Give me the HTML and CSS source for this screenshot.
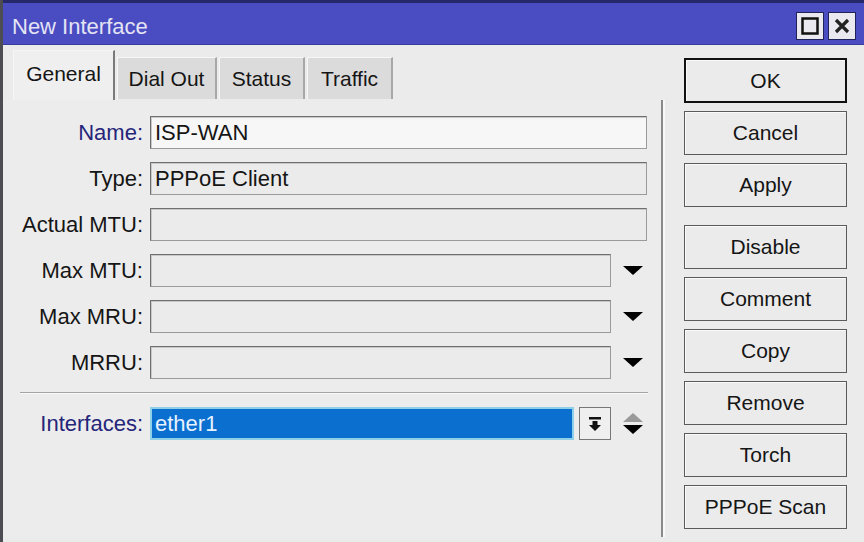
FILE: index.html
```html
<!DOCTYPE html>
<html>
<head>
    <title>New Interface</title>
    <link rel="stylesheet" href="styles.css">
</head>
<body>
<div class="window">
    <div class="titlebar">
        <span class="title">New Interface</span>
        <div class="winbtns">
            <span class="winbtn">
                <svg width="18" height="18" viewBox="0 0 18 18"><rect x="1.5" y="1.5" width="15" height="15" fill="none" stroke="#111" stroke-width="2.5"/></svg>
            </span>
            <span class="winbtn">
                <svg width="16" height="16" viewBox="0 0 16 16"><path d="M2 2 L14 14 M14 2 L2 14" stroke="#222" stroke-width="3.2"/></svg>
            </span>
        </div>
    </div>
    <div class="main">
        <div class="tabsarea">
            <div class="tabs">
                <div class="tab active">General</div>
                <div class="tab">Dial Out</div>
                <div class="tab">Status</div>
                <div class="tab">Traffic</div>
            </div>
            <div class="panel">
                <div class="row">
                    <span class="label key">Name:</span>
                    <div class="field"><div class="input white">ISP-WAN</div></div>
                </div>
                <div class="row">
                    <span class="label">Type:</span>
                    <div class="field"><div class="input">PPPoE Client</div></div>
                </div>
                <div class="row">
                    <span class="label">Actual MTU:</span>
                    <div class="field"><div class="input"></div></div>
                </div>
                <div class="row">
                    <span class="label">Max MTU:</span>
                    <div class="field"><div class="input"></div><span class="drop"><i class="tri down"></i></span></div>
                </div>
                <div class="row">
                    <span class="label">Max MRU:</span>
                    <div class="field"><div class="input"></div><span class="drop"><i class="tri down"></i></span></div>
                </div>
                <div class="row">
                    <span class="label">MRRU:</span>
                    <div class="field"><div class="input"></div><span class="drop"><i class="tri down"></i></span></div>
                </div>
                <div class="separator"></div>
                <div class="row">
                    <span class="label key">Interfaces:</span>
                    <div class="field">
                        <div class="input selected">ether1</div>
                        <span class="smallbtn">
                            <svg width="14" height="16" viewBox="0 0 14 16"><rect x="1" y="1" width="12" height="2.5" fill="#111"/><path d="M4.5 5 H9.5 V9 H13 L7 15 L1 9 H4.5 Z" fill="#111"/></svg>
                        </span>
                        <span class="drop updown"><i class="tri up"></i><i class="tri down"></i></span>
                    </div>
                </div>
            </div>
        </div>
        <div class="actions">
            <div class="btn default">OK</div>
            <div class="btn">Cancel</div>
            <div class="btn">Apply</div>
            <div class="btn spaced">Disable</div>
            <div class="btn">Comment</div>
            <div class="btn">Copy</div>
            <div class="btn">Remove</div>
            <div class="btn">Torch</div>
            <div class="btn">PPPoE Scan</div>
        </div>
    </div>
</div>
</body>
</html>
```

FILE: styles.css
```css
body {
    margin: 0;
    background-color: #ebebeb;
    font-family: "Liberation Sans", Arial, sans-serif;
    font-size: 21px;
    color: #151515;
}

.window {
    width: 864px;
    height: 542px;
    box-sizing: border-box;
    border-left: 3px solid #4c4c52;
    overflow: hidden;
}

.titlebar {
    height: 45px;
    box-sizing: border-box;
    background-color: #4a4cc2;
    border-top: 3px solid #26286a;
    border-bottom: 1px solid #3a3c9a;
    display: flex;
    align-items: center;
    justify-content: space-between;
    padding: 0 8px 0 9px;
}

.title {
    color: #e4e4f4;
    font-size: 22px;
    margin-top: 6px;
}

.winbtns {
    display: flex;
    gap: 4px;
    margin-top: 4px;
}

.winbtn {
    width: 26px;
    height: 26px;
    background-color: #e9e9ef;
    border: 1px solid #20225a;
    display: flex;
    align-items: center;
    justify-content: center;
}

.main {
    display: flex;
    padding-top: 5px;
}

.tabsarea {
    width: 660px;
}

.tabs {
    display: flex;
    align-items: flex-end;
    height: 50px;
    padding-left: 10px;
    gap: 2px;
}

.tab {
    height: 42px;
    box-sizing: border-box;
    background-color: #dbdbdb;
    border-top: 1px solid #f6f6f6;
    border-left: 1px solid #f6f6f6;
    border-right: 2px solid #a8a8a8;
    display: flex;
    align-items: center;
    justify-content: center;
    margin-bottom: 1px;
    font-size: 21px;
}

.tab:nth-child(1) { width: 102px; }
.tab:nth-child(2) { width: 100px; }
.tab:nth-child(3) { width: 86px; }
.tab:nth-child(4) { width: 86px; }

.tab.active {
    height: 50px;
    margin-bottom: 0;
    background-color: #efefef;
    border-right: 2px solid #7a7a7a;
    padding-bottom: 4px;
}

.panel {
    height: 437px;
    box-sizing: border-box;
    background-color: #ececec;
    border-right: 2px solid #8a8a8a;
    box-shadow: 2px 0 0 #f8f8f8;
    padding: 16px 14px 0 0;
    display: flex;
    flex-direction: column;
    gap: 13px;
}

.row {
    display: grid;
    grid-template-columns: 140px 1fr;
    column-gap: 7px;
    align-items: center;
    height: 33px;
}

.label {
    text-align: right;
    white-space: nowrap;
    font-size: 22px;
}

.label.key {
    color: #25257a;
}

.field {
    display: flex;
    align-items: center;
    height: 33px;
}

.input {
    flex: 1;
    height: 33px;
    box-sizing: border-box;
    border: 1px solid #707070;
    border-right-color: #9a9a9a;
    border-bottom-color: #9a9a9a;
    box-shadow: inset 1px 1px 0 #c8c8c8;
    background-color: #ebebeb;
    padding-left: 4px;
    line-height: 31px;
    white-space: nowrap;
    font-size: 22px;
}

.input.white {
    background-color: #f7f7f7;
}

.input.selected {
    background-color: #0b6fcf;
    color: #e6f2ff;
    border: 2px solid #8fd0e8;
    box-shadow: none;
    line-height: 29px;
    padding-left: 3px;
    margin-right: 5px;
}

.smallbtn {
    width: 32px;
    height: 33px;
    box-sizing: border-box;
    border: 1px solid #777;
    background-color: #efefef;
    display: flex;
    align-items: center;
    justify-content: center;
}

.drop {
    width: 36px;
    box-sizing: border-box;
    padding-left: 8px;
    display: flex;
    flex-direction: column;
    align-items: center;
    justify-content: center;
    gap: 3px;
}

.tri {
    display: block;
    width: 0;
    height: 0;
    border-left: 10px solid transparent;
    border-right: 10px solid transparent;
}

.tri.down {
    border-top: 9px solid #000;
}

.tri.up {
    border-bottom: 9px solid #9a9a9a;
}

.separator {
    height: 0;
    margin: 0 0 0 17px;
    border-top: 1px solid #a3a3a3;
    border-bottom: 1px solid #fafafa;
    width: 628px;
}

.actions {
    margin-left: 21px;
    padding-top: 8px;
    display: flex;
    flex-direction: column;
    gap: 8px;
}

.btn {
    width: 163px;
    height: 44px;
    box-sizing: border-box;
    border: 1px solid #5a5a5a;
    box-shadow: inset 1px 1px 0 #fafafa;
    background-color: #ebebeb;
    display: flex;
    align-items: center;
    justify-content: center;
    font-size: 21px;
}

.btn.default {
    height: 45px;
    border: 2px solid #111;
}

.btn.spaced {
    margin-top: 10px;
}
```
